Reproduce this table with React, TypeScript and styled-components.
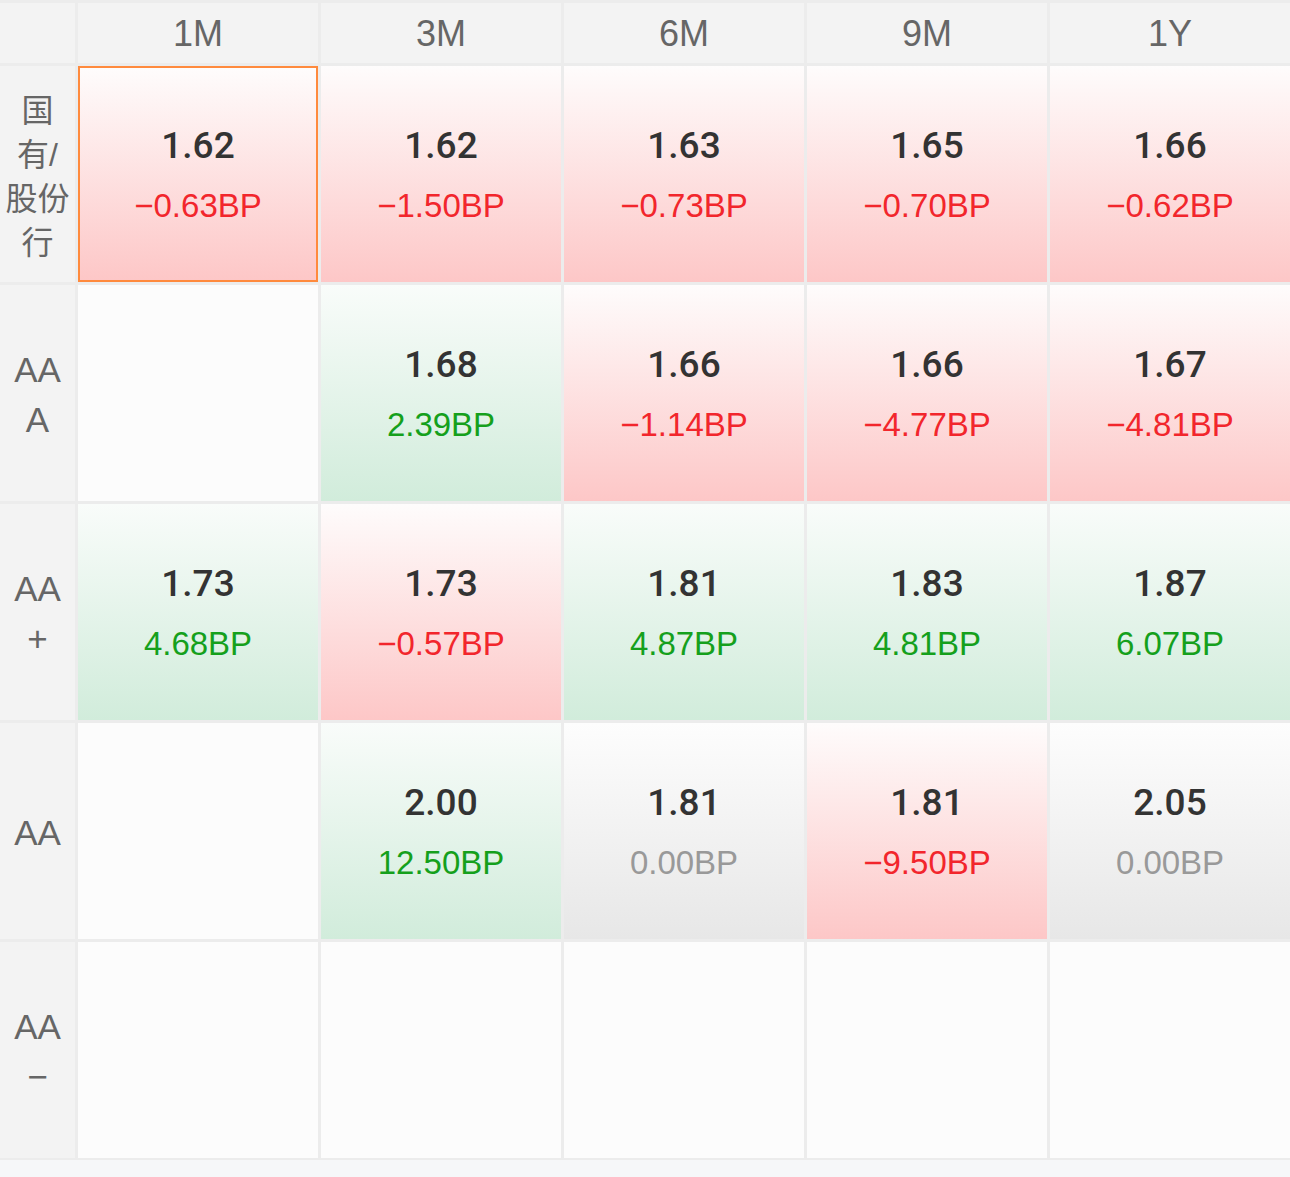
import React from "react";
import styled, { createGlobalStyle, css } from "styled-components";

const Global = createGlobalStyle`
  html, body { margin: 0; padding: 0; background: #f6f7f9; }
  body { font-family: "Liberation Sans", "Noto Sans CJK SC", sans-serif; }
`;

type Tone = "up" | "down" | "flat" | "empty";

const Grid = styled.div`
  display: grid;
  grid-template-columns: 75px repeat(5, 240px);
  grid-template-rows: 60px repeat(5, 216px);
  gap: 3px;
  padding: 3px 0 2px 0;
  background: #ececec;
  width: 1290px;
  box-sizing: border-box;
`;

const HeaderCell = styled.div`
  background: #f3f3f3;
  color: #666;
  font-size: 36px;
  padding-top: 2px;
  box-sizing: border-box;
  display: flex;
  align-items: center;
  justify-content: center;
`;

const RowLabel = styled.div<{ $cjk?: boolean }>`
  background: #f3f3f3;
  color: #666;
  font-size: 35px;
  line-height: 50px;
  padding-top: 4px;
  box-sizing: border-box;
  display: flex;
  flex-direction: column;
  align-items: center;
  justify-content: center;
  text-align: center;
  font-family: "Liberation Sans", "Noto Sans CJK SC", sans-serif;
  ${(p) =>
    p.$cjk &&
    css`
      font-size: 32px;
      line-height: 44px;
      padding-top: 6px;
    `}
`;

const toneBg: Record<Tone, string> = {
  up: "linear-gradient(180deg, #fefcfc 0%, #fdc7c7 100%)",
  down: "linear-gradient(180deg, #f9fcfa 0%, #d1ecdb 100%)",
  flat: "linear-gradient(180deg, #fdfdfd 0%, #e7e7e7 100%)",
  empty: "#fcfcfc",
};

const toneColor: Record<Tone, string> = {
  up: "#f2262c",
  down: "#15a01c",
  flat: "#999999",
  empty: "#999999",
};

const Cell = styled.div<{ $tone: Tone; $selected?: boolean }>`
  background: ${(p) => toneBg[p.$tone]};
  display: flex;
  flex-direction: column;
  align-items: center;
  justify-content: center;
  gap: 16px;
  padding-top: 3px;
  box-sizing: border-box;
  ${(p) =>
    p.$selected &&
    css`
      border: 2px solid #ff8a3d;
    `}
`;

const Value = styled.div`
  color: #333;
  font-size: 37px;
  line-height: 44px;
  font-family: "Roboto", "Liberation Sans", sans-serif;
  font-weight: 500;
`;

const Change = styled.div<{ $tone: Tone }>`
  color: ${(p) => toneColor[p.$tone]};
  font-size: 33px;
  line-height: 44px;
`;

type CellData = { v: string; c: string; t: Tone } | null;

const cols = ["1M", "3M", "6M", "9M", "1Y"];

const rows: { label: string[]; cjk?: boolean; cells: CellData[] }[] = [
  {
    label: ["国", "有/", "股份", "行"],
    cjk: true,
    cells: [
      { v: "1.62", c: "−0.63BP", t: "up" },
      { v: "1.62", c: "−1.50BP", t: "up" },
      { v: "1.63", c: "−0.73BP", t: "up" },
      { v: "1.65", c: "−0.70BP", t: "up" },
      { v: "1.66", c: "−0.62BP", t: "up" },
    ],
  },
  {
    label: ["AA", "A"],
    cells: [
      null,
      { v: "1.68", c: "2.39BP", t: "down" },
      { v: "1.66", c: "−1.14BP", t: "up" },
      { v: "1.66", c: "−4.77BP", t: "up" },
      { v: "1.67", c: "−4.81BP", t: "up" },
    ],
  },
  {
    label: ["AA", "+"],
    cells: [
      { v: "1.73", c: "4.68BP", t: "down" },
      { v: "1.73", c: "−0.57BP", t: "up" },
      { v: "1.81", c: "4.87BP", t: "down" },
      { v: "1.83", c: "4.81BP", t: "down" },
      { v: "1.87", c: "6.07BP", t: "down" },
    ],
  },
  {
    label: ["AA"],
    cells: [
      null,
      { v: "2.00", c: "12.50BP", t: "down" },
      { v: "1.81", c: "0.00BP", t: "flat" },
      { v: "1.81", c: "−9.50BP", t: "up" },
      { v: "2.05", c: "0.00BP", t: "flat" },
    ],
  },
  {
    label: ["AA", "−"],
    cells: [null, null, null, null, null],
  },
];

export default function App() {
  return (
    <>
      <Global />
      <Grid>
        <HeaderCell />
        {cols.map((c) => (
          <HeaderCell key={c}>{c}</HeaderCell>
        ))}
        {rows.map((r, ri) => (
          <React.Fragment key={ri}>
            <RowLabel $cjk={r.cjk}>
              {r.label.map((l, i) => (
                <span key={i}>{l}</span>
              ))}
            </RowLabel>
            {r.cells.map((cell, ci) =>
              cell ? (
                <Cell key={ci} $tone={cell.t} $selected={ri === 0 && ci === 0}>
                  <Value>{cell.v}</Value>
                  <Change $tone={cell.t}>{cell.c}</Change>
                </Cell>
              ) : (
                <Cell key={ci} $tone="empty" />
              )
            )}
          </React.Fragment>
        ))}
      </Grid>
    </>
  );
}
